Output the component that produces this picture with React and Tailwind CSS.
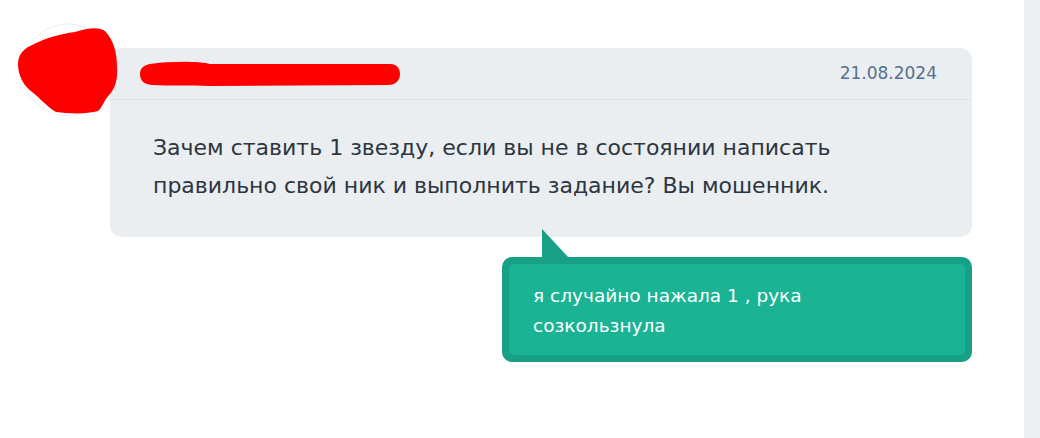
import React from 'react';

const font = { fontFamily: '"DejaVu Sans", "Noto Sans", sans-serif' };

const Scribbles = () => (
  <svg className="absolute left-0 top-0 pointer-events-none" width="420" height="130" viewBox="0 0 420 130">
    <circle cx="68" cy="70" r="46" fill="#ffffff" stroke="#eceef0" strokeWidth="1" />
    <path
      d="M30 46 C45 38 60 34 75 32 C88 28 100 26 106 32 C113 40 117 52 117 66 C118 80 115 88 110 94 C104 100 102 108 98 111 C88 114 70 114 56 112 C46 106 40 98 32 92 C24 86 18 76 18 64 C18 56 22 50 30 46 Z"
      fill="#ff0000"
    />
    <path
      d="M150 64 C170 61 200 61 210 64 L390 64 C398 64 400 70 400 74 C400 80 396 85 388 85 L210 86 C190 85 170 86 152 85 C143 84 140 80 140 74 C140 68 144 65 150 64 Z"
      fill="#ff0000"
    />
  </svg>
);

export default function App() {
  return (
    <div className="flex w-[1040px] h-[438px] bg-white overflow-hidden" style={font}>
      <div className="relative flex-1 pl-[110px] pr-[52px] pt-[48px]">
        <div className="rounded-[12px] bg-[#ebeef0]">
          <div className="flex h-[52px] items-center justify-end border-b border-dotted border-[#d3d7da] pr-[35px]">
            <span className="text-[17px] text-[#55708f]">21.08.2024</span>
          </div>
          <div className="px-[43px] pt-[29px] pb-[32px] text-[22px] leading-[38px] text-[#2c3540]">
            Зачем ставить 1 звезду, если вы не в состоянии написать
            <br />
            правильно свой ник и выполнить задание? Вы мошенник.
          </div>
        </div>
        <div className="mt-[20px] flex justify-end">
          <div className="relative w-[470px] rounded-[10px] bg-[#17a085] p-[7px]">
            <svg className="absolute left-[40px] top-[-28px]" width="28" height="30" viewBox="0 0 28 30">
              <polygon points="0,0 27,29 0,29" fill="#17a085" />
            </svg>
            <div className="rounded-[5px] bg-[#1ab394] pl-[24px] pr-[20px] pt-[17px] pb-[14px] text-[18.5px] leading-[30px] text-white">
              я случайно нажала 1 , рука
              <br />
              созкользнула
            </div>
          </div>
        </div>
        <Scribbles />
      </div>
      <div className="w-[16px] bg-[#eceff1]" />
    </div>
  );
}
